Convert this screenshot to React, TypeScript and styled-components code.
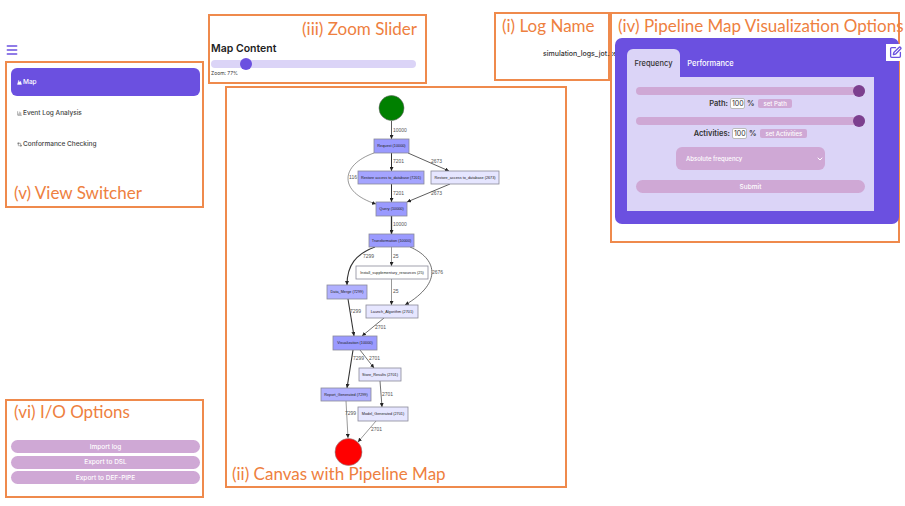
import React from "react";
import styled, { createGlobalStyle } from "styled-components";
import { ChartColumn, ChevronDown, GitCompare, Menu, Mountain, SquarePen } from "lucide-react";

const PURPLE = "#6b50e0";
const LILAC = "#dbd4f7";
const MAUVE = "#cfa8d5";
const ORANGE = "#ef8a4c";

const GlobalStyle = createGlobalStyle`
  html, body { margin: 0; background: #fff; }
  * { box-sizing: border-box; }
`;

const Page = styled.div`
  width: 905px;
  height: 506px;
  display: flex;
  overflow: hidden;
  font-family: Inter, "Liberation Sans", sans-serif;
  color: #333;
`;

const Sidebar = styled.aside`
  width: 199px;
  margin-left: 5px;
  padding-top: 43px;
  display: flex;
  flex-direction: column;
`;

const MenuButton = styled.div`
  height: 14px;
  margin-bottom: 4px;
  color: ${PURPLE};
  line-height: 0;
`;

const Callout = styled.section`
  position: relative;
  border: 2px solid ${ORANGE};
  display: flex;
  flex-direction: column;
`;

const CalloutLabel = styled.div<{ $align?: string }>`
  font-family: Lato, "Open Sans", sans-serif;
  font-size: 17px;
  line-height: 20px;
  color: #ee8040;
  white-space: nowrap;
  text-align: ${(p) => p.$align ?? "left"};
`;

const SwitcherBox = styled(Callout)`
  height: 147px;
  padding: 5px 2px 3px 4px;
`;

const NavList = styled.nav`
  display: flex;
  flex-direction: column;
  gap: 3px;
  flex: 1;
`;

const NavItem = styled.div<{ $active?: boolean }>`
  height: 28px;
  padding-left: 6px;
  display: flex;
  align-items: center;
  gap: 1px;
  border-radius: 6px;
  font-size: 6.5px;
  font-weight: 500;
  background: ${(p) => (p.$active ? PURPLE : "transparent")};
  color: ${(p) => (p.$active ? "#fff" : "#444")};
`;

const SwitcherLabel = styled(CalloutLabel)`
  padding-left: 3px;
`;

const IoBox = styled(Callout)`
  height: 99px;
  margin-top: 191px;
  padding: 1px 2px 0 4px;
`;

const IoLabel = styled(SwitcherLabel)`
  margin-bottom: 18px;
`;

const IoList = styled.div`
  display: flex;
  flex-direction: column;
  gap: 2.5px;
`;

const PillButton = styled.button<{ $height?: number }>`
  height: ${(p) => p.$height ?? 13}px;
  padding: 0;
  border: 0;
  border-radius: 7px;
  background: ${MAUVE};
  color: #fff;
  font-family: inherit;
  font-size: 6.5px;
  font-weight: 500;
`;

const Main = styled.main`
  margin-left: 4px;
  padding-top: 12px;
  display: grid;
  grid-template-columns: 219px 67px 73px 43px 290px;
  grid-template-rows: 72px 402px;
  row-gap: 2px;
`;

const ZoomBox = styled(Callout)`
  grid-column: 1;
  grid-row: 1;
  margin-top: 2px;
  padding: 3px 8px 0 1px;
`;

const MapTitle = styled.div`
  margin-top: 3px;
  font-size: 10.5px;
  line-height: 14px;
  font-weight: 600;
  color: #222;
`;

const Range = styled.input.attrs({ type: "range" })<{ $thumb?: string }>`
  appearance: none;
  display: block;
  width: 100%;
  height: 8px;
  margin: 0;
  border-radius: 4px;
  background: ${(p) => (p.$thumb ? MAUVE : LILAC)};

  &::-webkit-slider-thumb {
    appearance: none;
    width: 12px;
    height: 12px;
    border-radius: 50%;
    background: ${(p) => p.$thumb ?? PURPLE};
  }
`;

const ZoomRange = styled(Range)`
  margin-top: 4px;
  width: 205px;
`;

const ZoomText = styled.div`
  margin-top: 1px;
  font-size: 5px;
  line-height: 8px;
`;

const LogBox = styled(Callout)`
  grid-column: 3 / 5;
  grid-row: 1;
  height: 69px;
  padding: 2px 6px 0;
`;

const LogName = styled.div`
  margin: 13px 0 0 41px;
  font-size: 7px;
  line-height: 9px;
  font-weight: 500;
  white-space: nowrap;
`;

const CanvasBox = styled(Callout)`
  grid-column: 1 / 4;
  grid-row: 2;
  margin-left: 17px;
`;

const CanvasLabel = styled(CalloutLabel)`
  position: absolute;
  left: 5px;
  bottom: 2px;
`;

const GraphSvg = styled.svg`
  position: absolute;
  left: -2px;
  top: -2px;
  font-family: "Liberation Sans", Arial, sans-serif;
`;

const OptionsBox = styled(Callout)`
  grid-column: 5;
  grid-row: 1 / 3;
  align-self: start;
  height: 231px;
  padding: 2px 0 0 3px;
  z-index: 1;
`;

const OptionsLabel = styled(CalloutLabel)`
  padding-left: 3px;
`;

const OptionsPanel = styled.div`
  position: relative;
  width: 284px;
  height: 186px;
  margin-top: 2px;
  padding: 11px 0 0 12px;
  background: ${PURPLE};
  border-radius: 7px;
`;

const EditTab = styled.div`
  position: absolute;
  top: 6px;
  left: 271px;
  width: 24px;
  height: 17px;
  padding: 2px 0 0 3px;
  background: #fff;
  color: ${PURPLE};
  line-height: 0;
`;

const TabRow = styled.div`
  display: flex;
  height: 28px;
`;

const Tab = styled.div<{ $active?: boolean }>`
  width: ${(p) => (p.$active ? 53 : 61)}px;
  display: flex;
  align-items: center;
  justify-content: center;
  border-radius: 6px 6px 0 0;
  font-size: 7.5px;
  font-weight: 500;
  background: ${(p) => (p.$active ? LILAC : "transparent")};
  color: ${(p) => (p.$active ? "#333" : "#fff")};
`;

const TabBody = styled.div`
  width: 247px;
  height: 134px;
  padding: 10px 9px 0;
  background: ${LILAC};
  display: flex;
  flex-direction: column;
`;

const SetRow = styled.div`
  height: 10px;
  margin: 3px 0 9px;
  display: flex;
  align-items: center;
  justify-content: center;
  gap: 2px;
  font-size: 7.5px;
  font-weight: 600;
`;

const PercentInput = styled.div`
  width: 15px;
  height: 11px;
  padding-left: 1px;
  background: #fff;
  border: 1px solid #bbb;
  border-radius: 2px;
  font-size: 7px;
  font-weight: 400;
  line-height: 9px;
`;

const SetButton = styled.div`
  height: 9px;
  margin-left: 2px;
  padding: 0 5px;
  border-radius: 2px;
  background: ${MAUVE};
  color: #fff;
  font-size: 6px;
  font-weight: 500;
  line-height: 9px;
`;

const SelectBox = styled.div`
  width: 149px;
  height: 23px;
  margin: 0 auto 10px;
  padding: 0 1px 0 10px;
  display: flex;
  align-items: center;
  justify-content: space-between;
  border-radius: 6px;
  background: ${MAUVE};
  color: #fff;
  font-size: 6px;
  font-weight: 500;
`;

type GraphNode = { label: string; x: number; y: number; w: number; h: number; fill: string };
type GraphEdge = { d: string; width: number; label: string; lx: number; ly: number };

const DARK = "#9a9aff";
const MID = "#b0b0ff";
const LIGHT = "#e6e6ff";

const nodes: GraphNode[] = [
  { label: "Request (10000)", x: 374, y: 139, w: 35, h: 14, fill: DARK },
  { label: "Restore access to_database (7201)", x: 358, y: 171, w: 66, h: 13, fill: "#a4a4ff" },
  { label: "Restore_access to_database (2673)", x: 431, y: 171, w: 68, h: 13, fill: LIGHT },
  { label: "Query (10000)", x: 376, y: 202, w: 31, h: 14, fill: DARK },
  { label: "Transformation (10000)", x: 369, y: 234, w: 45, h: 13, fill: DARK },
  { label: "Install_supplementary_resources (25)", x: 356, y: 266, w: 72, h: 13, fill: "#ffffff" },
  { label: "Data_Merge (7299)", x: 327, y: 285, w: 40, h: 14, fill: MID },
  { label: "Launch_Algorithm (2701)", x: 366, y: 305, w: 52, h: 13, fill: LIGHT },
  { label: "Visualization (10000)", x: 333, y: 336, w: 44, h: 14, fill: DARK },
  { label: "Store_Results (2701)", x: 359, y: 368, w: 42, h: 13, fill: LIGHT },
  { label: "Report_Generated (7299)", x: 321, y: 388, w: 50, h: 13, fill: MID },
  { label: "Model_Generated (2701)", x: 358, y: 407, w: 50, h: 14, fill: LIGHT },
];

const edges: GraphEdge[] = [
  { d: "M391.5 121 L391.5 139", width: 0.8, label: "10000", lx: 393, ly: 132 },
  { d: "M391.5 153 L391.5 171", width: 1, label: "7201", lx: 393, ly: 163 },
  { d: "M408 153 L449 171", width: 0.8, label: "2673", lx: 431, ly: 163 },
  { d: "M374 153 C340 165 338 192 376 204", width: 0.5, label: "116", lx: 349, ly: 179 },
  { d: "M391.5 184 L391.5 202", width: 1, label: "7201", lx: 393, ly: 195 },
  { d: "M450 184 L407 202", width: 0.8, label: "2673", lx: 431, ly: 195 },
  { d: "M391.5 216 L391.5 234", width: 1.3, label: "10000", lx: 393, ly: 226 },
  { d: "M375 247 C356 254 347 265 347 285", width: 1.1, label: "7299", lx: 363, ly: 258 },
  { d: "M391.5 247 L391.5 266", width: 0.5, label: "25", lx: 393, ly: 258 },
  { d: "M410 247 C436 258 444 282 405 305", width: 0.7, label: "2676", lx: 432, ly: 274 },
  { d: "M391.5 279 L391.5 305", width: 0.5, label: "25", lx: 393, ly: 293 },
  { d: "M348 299 L354 336", width: 1.1, label: "7299", lx: 350, ly: 313 },
  { d: "M384 318 L362 336", width: 0.7, label: "2701", lx: 375, ly: 329 },
  { d: "M353 350 L347 388", width: 1.1, label: "7299", lx: 353, ly: 360 },
  { d: "M360 350 L374 368", width: 0.7, label: "2701", lx: 369, ly: 360 },
  { d: "M380 381 L382 407", width: 0.7, label: "2701", lx: 382, ly: 396 },
  { d: "M346 401 L348 438", width: 0.5, label: "7299", lx: 345, ly: 415 },
  { d: "M376 421 L358 442", width: 0.5, label: "2701", lx: 371, ly: 431 },
];

const PipelineGraph = () => (
  <GraphSvg width={342} height={402} viewBox="225 86 342 402">
    <defs>
      <marker id="arrow" viewBox="0 0 6 6" refX="6" refY="3" markerWidth="4" markerHeight="4" markerUnits="userSpaceOnUse" orient="auto">
        <path d="M0 0 L6 3 L0 6 Z" fill="#222" />
      </marker>
    </defs>
    <circle cx={391.5} cy={108} r={12.5} fill="#008000" stroke="#666" strokeWidth={0.6} />
    <circle cx={348.5} cy={452} r={13.5} fill="#ff0000" stroke="#888" strokeWidth={0.6} />
    {edges.map((e) => (
      <g key={e.d}>
        <path d={e.d} fill="none" stroke="#333" strokeWidth={e.width} markerEnd="url(#arrow)" />
        <text x={e.lx} y={e.ly} fontSize={5} fill="#555">{e.label}</text>
      </g>
    ))}
    {nodes.map((n) => (
      <g key={n.label}>
        <rect x={n.x} y={n.y} width={n.w} height={n.h} fill={n.fill} stroke="#8a8a9a" strokeWidth={0.8} />
        <text x={n.x + n.w / 2} y={n.y + n.h / 2 + 1.3} fontSize={3.8} fill="#222" textAnchor="middle">{n.label}</text>
      </g>
    ))}
  </GraphSvg>
);

const App = () => (
  <Page>
    <GlobalStyle />
    <Sidebar>
      <MenuButton><Menu size={14} strokeWidth={2.6} /></MenuButton>
      <SwitcherBox>
        <NavList>
          <NavItem $active><Mountain size={5} fill="#fff" />Map</NavItem>
          <NavItem><ChartColumn size={5} />Event Log Analysis</NavItem>
          <NavItem><GitCompare size={5} />Conformance Checking</NavItem>
        </NavList>
        <SwitcherLabel>(v) View Switcher</SwitcherLabel>
      </SwitcherBox>
      <IoBox>
        <IoLabel>(vi) I/O Options</IoLabel>
        <IoList>
          <PillButton>Import log</PillButton>
          <PillButton>Export to DSL</PillButton>
          <PillButton>Export to DEF-PIPE</PillButton>
        </IoList>
      </IoBox>
    </Sidebar>
    <Main>
      <ZoomBox>
        <CalloutLabel $align="right">(iii) Zoom Slider</CalloutLabel>
        <MapTitle>Map Content</MapTitle>
        <ZoomRange min={50} max={230} defaultValue={77} />
        <ZoomText>Zoom: 77%</ZoomText>
      </ZoomBox>
      <LogBox>
        <CalloutLabel>(i) Log Name</CalloutLabel>
        <LogName>simulation_logs_jot.xes</LogName>
      </LogBox>
      <CanvasBox>
        <PipelineGraph />
        <CanvasLabel>(ii) Canvas with Pipeline Map</CanvasLabel>
      </CanvasBox>
      <OptionsBox>
        <OptionsLabel>(iv) Pipeline Map Visualization Options</OptionsLabel>
        <OptionsPanel>
          <EditTab><SquarePen size={13} strokeWidth={2.4} /></EditTab>
          <TabRow>
            <Tab $active>Frequency</Tab>
            <Tab>Performance</Tab>
          </TabRow>
          <TabBody>
            <Range $thumb="#7c3f8f" defaultValue={100} />
            <SetRow>
              Path:<PercentInput>100</PercentInput>%<SetButton>set Path</SetButton>
            </SetRow>
            <Range $thumb="#7c3f8f" defaultValue={100} />
            <SetRow>
              Activities:<PercentInput>100</PercentInput>%<SetButton>set Activities</SetButton>
            </SetRow>
            <SelectBox>Absolute frequency<ChevronDown size={8} strokeWidth={3} /></SelectBox>
            <PillButton>Submit</PillButton>
          </TabBody>
        </OptionsPanel>
      </OptionsBox>
    </Main>
  </Page>
);

export default App;
